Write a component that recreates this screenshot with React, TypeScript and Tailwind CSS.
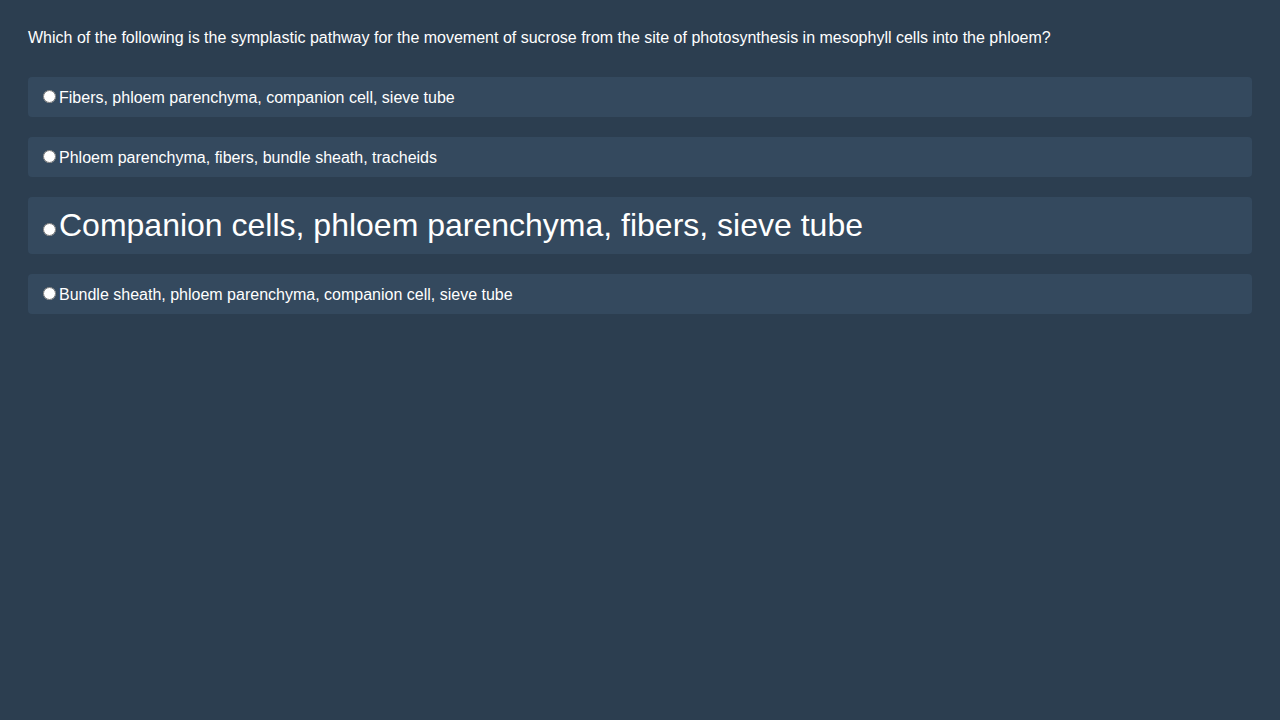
import React from "react";

const options = [
  { text: "Fibers, phloem parenchyma, companion cell, sieve tube", big: false },
  { text: "Phloem parenchyma, fibers, bundle sheath, tracheids", big: false },
  { text: "Companion cells, phloem parenchyma, fibers, sieve tube", big: true },
  { text: "Bundle sheath, phloem parenchyma, companion cell, sieve tube", big: false },
];

export default function App() {
  return (
    <div
      className="min-h-[720px] w-full bg-[#2c3e50] p-7 text-white"
      style={{ fontFamily: '"Liberation Sans", Arial, sans-serif' }}
    >
      <p className="text-base leading-[20px] mb-[29px]">
        Which of the following is the symplastic pathway for the movement of sucrose from the site of photosynthesis in mesophyll cells into the phloem?
      </p>
      <div className="flex flex-col gap-5">
        {options.map((o, i) => (
          <label
            key={i}
            className={`block rounded bg-[#34495e] px-[10px] ${o.big ? "py-[10px] text-[32px] leading-[37px]" : "py-[10px] text-base leading-[19px]"}`}
          >
            <input type="radio" name="q" className="mr-[3px] ml-[5px] mt-[3px]" />
            {o.text}
          </label>
        ))}
      </div>
    </div>
  );
}
